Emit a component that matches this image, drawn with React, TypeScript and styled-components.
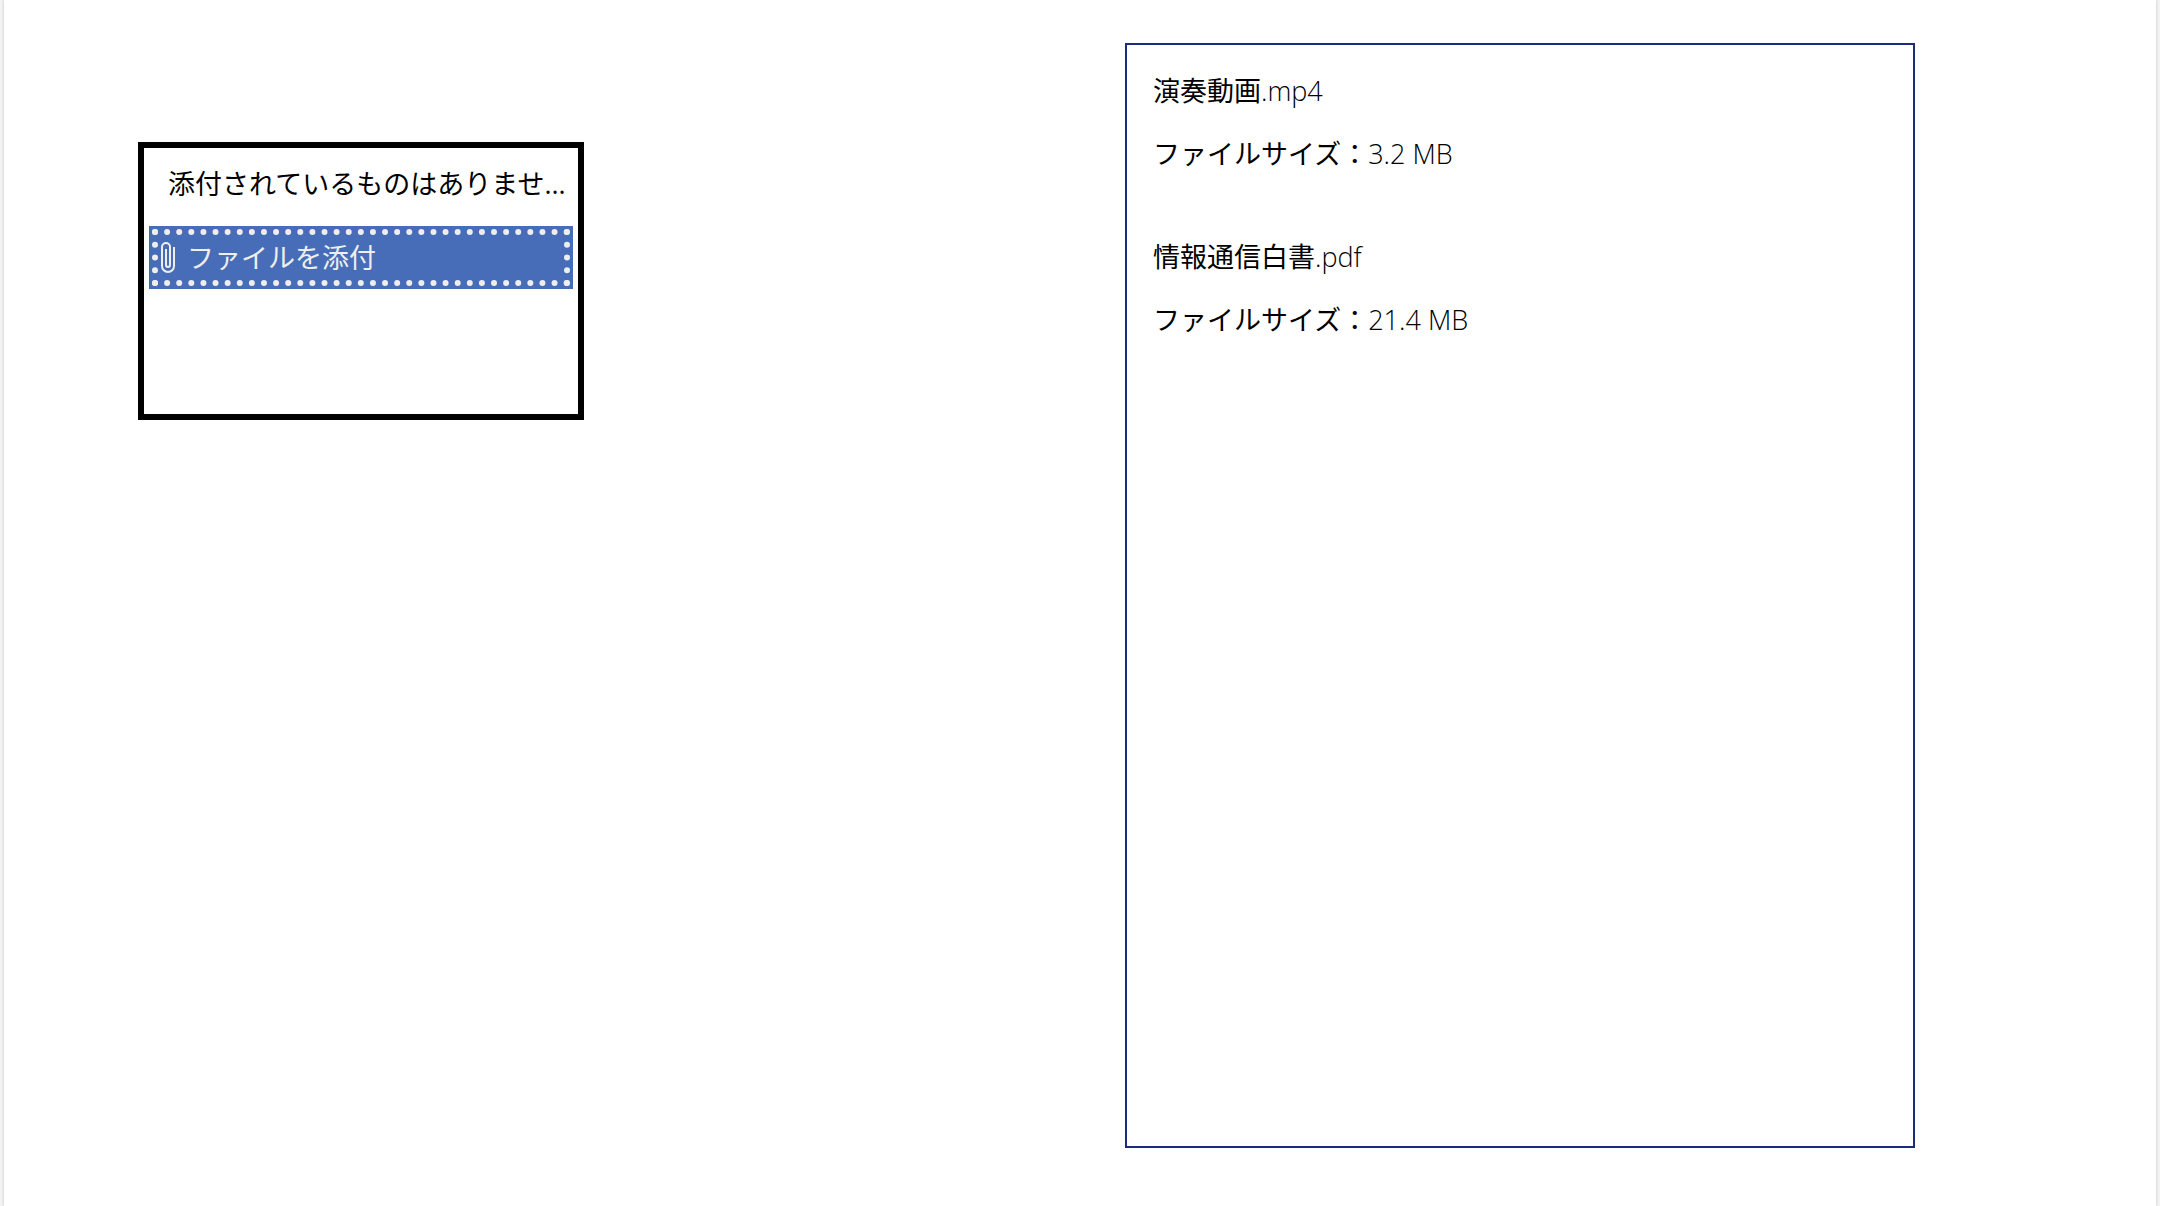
import React from "react";
import styled, { createGlobalStyle } from "styled-components";

const GlobalStyle = createGlobalStyle`
  *, *::before, *::after { box-sizing: border-box; }
  body {
    margin: 0;
    background: #f3f3f3;
    color: #000;
    font-family: "Open Sans", "Noto Sans CJK JP", sans-serif;
    font-size: 27px;
    font-weight: 300;
  }
`;

const Screen = styled.main`
  display: grid;
  grid-template-columns: 134fr 446fr 541fr 790fr 241fr;
  align-items: start;
  min-height: 100vh;
  margin: 0 4px;
  background: #fff;
  box-shadow: 0 0 3px rgba(0, 0, 0, 0.2);
`;

const AttachmentBox = styled.section`
  grid-column: 2;
  min-width: 0;
  min-height: 278px;
  margin-top: 142px;
  padding: 4px 5px;
  border: 6px solid #000;
`;

const EmptyMessage = styled.p`
  margin: 0;
  padding: 0 0 11px 19px;
  line-height: 63px;
  font-weight: 400;
  white-space: nowrap;
`;

const AttachButton = styled.button`
  display: flex;
  align-items: center;
  gap: 11px;
  width: 100%;
  height: 63px;
  padding: 0 11px 3px;
  border: 0;
  outline: 6px dotted #eee;
  outline-offset: -9px;
  background: #486db8;
  color: #eee;
  font: inherit;
  font-weight: 400;
  text-align: left;
  cursor: pointer;
`;

const ClipIcon = styled.svg`
  flex: none;
  width: 16px;
  height: 33px;
`;

const FilePanel = styled.section`
  grid-column: 4;
  min-height: calc(100vh - 101px);
  margin: 43px 0 58px;
  padding: 14px 26px;
  border: 2px solid #1b2c7d;
`;

const FileList = styled.ul`
  display: grid;
  gap: 40px;
  margin: 0;
  padding: 0;
  list-style: none;
`;

const FileLine = styled.p`
  margin: 0;
  line-height: 63px;
`;

const Japanese = styled.span`
  font-weight: 400;
`;

const files = [
  { name: "演奏動画", extension: ".mp4", size: "3.2 MB" },
  { name: "情報通信白書", extension: ".pdf", size: "21.4 MB" },
];

export default function App() {
  return (
    <>
      <GlobalStyle />
      <Screen>
        <AttachmentBox>
          <EmptyMessage>添付されているものはありませ...</EmptyMessage>
          <AttachButton type="button">
            <ClipIcon viewBox="0 0 16 33" fill="none" stroke="currentColor" strokeWidth="2" aria-hidden="true">
              <path d="M14 7V26a6 6 0 0 1-12 0V7a4 4 0 0 1 8 0V25a2 2 0 0 1-4 0V9" />
            </ClipIcon>
            ファイルを添付
          </AttachButton>
        </AttachmentBox>
        <FilePanel>
          <FileList>
            {files.map((file) => (
              <li key={file.name}>
                <FileLine>
                  <Japanese>{file.name}</Japanese>
                  {file.extension}
                </FileLine>
                <FileLine>
                  <Japanese>ファイルサイズ：</Japanese>
                  {file.size}
                </FileLine>
              </li>
            ))}
          </FileList>
        </FilePanel>
      </Screen>
    </>
  );
}
